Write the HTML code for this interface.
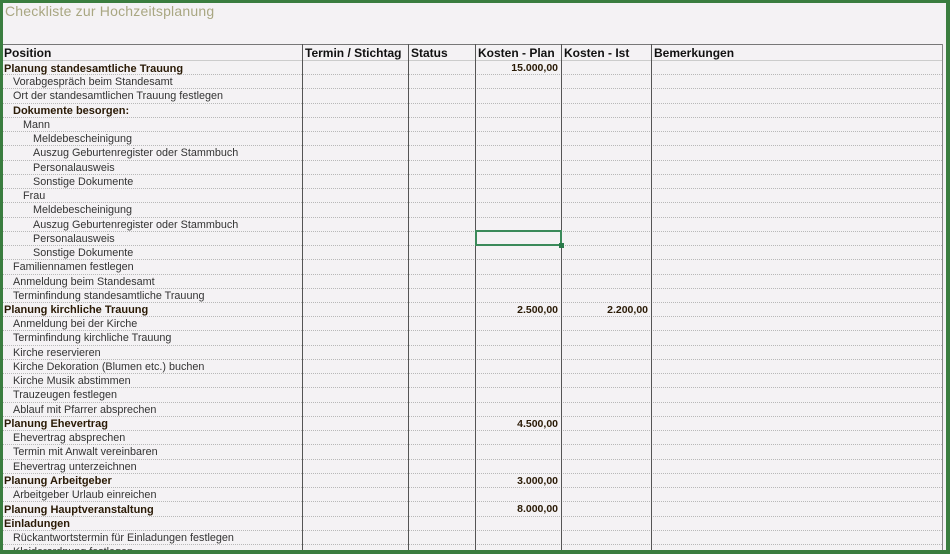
<!DOCTYPE html>
<html><head><meta charset="utf-8"><style>
*{margin:0;padding:0;box-sizing:border-box}
body{width:950px;height:554px;overflow:hidden;background:#3a7d3f;font-family:"Liberation Sans",Arial,sans-serif;position:relative}
#pg{position:absolute;left:3px;top:3px;width:943px;height:547px;background:#f4f2f4;overflow:hidden}
#title{position:absolute;left:2px;top:0px;font-size:14px;color:#a9a782;letter-spacing:0.2px}
.v{position:absolute;top:41px;height:520px;width:1px;background:#555}
#htop{position:absolute;left:0;top:41px;width:940px;height:1px;background:#777}
#hdr{position:absolute;left:0;top:42px;height:16px;width:940px;border-bottom:1px solid #ccc}
#hdr span{position:absolute;top:1px;font-weight:bold;font-size:12px;color:#111}
#rows{position:absolute;left:0;top:58px;width:939px}
.r{position:relative;height:14.24px;border-bottom:1px dotted #b8b8b8;font-size:10.8px;color:#333;white-space:nowrap}
.r span{position:absolute;top:1px}
.b span.t{font-weight:bold;font-size:11px;color:#2a1a05;top:1.5px}
.a{font-weight:bold;font-size:10.5px;color:#2a1a05;text-align:right}
.l0{left:1px}.l1{left:10px}.l2{left:20px}.l3{left:30px}
#sel{position:absolute;left:472px;top:227px;width:87px;height:16px;border:2px solid #3b8a5a;z-index:2}
#sel i{position:absolute;right:-4px;bottom:-4px;width:5px;height:5px;background:#2a7a4a}
</style></head><body>
<div id="pg">
<div id="title">Checkliste zur Hochzeitsplanung</div>
<div id="htop"></div>
<div id="hdr">
<span style="left:1px">Position</span>
<span style="left:302px">Termin / Stichtag</span>
<span style="left:408px">Status</span>
<span style="left:475px">Kosten - Plan</span>
<span style="left:561px">Kosten - Ist</span>
<span style="left:651px">Bemerkungen</span>
</div>
<div id="rows">
<div class="r b"><span class="t l0">Planung standesamtliche Trauung</span><span class="a" style="right:384px">15.000,00</span></div>
<div class="r"><span class="l1">Vorabgespräch beim Standesamt</span></div>
<div class="r"><span class="l1">Ort der standesamtlichen Trauung festlegen</span></div>
<div class="r b"><span class="t l1">Dokumente besorgen:</span></div>
<div class="r"><span class="l2">Mann</span></div>
<div class="r"><span class="l3">Meldebescheinigung</span></div>
<div class="r"><span class="l3">Auszug Geburtenregister oder Stammbuch</span></div>
<div class="r"><span class="l3">Personalausweis</span></div>
<div class="r"><span class="l3">Sonstige Dokumente</span></div>
<div class="r"><span class="l2">Frau</span></div>
<div class="r"><span class="l3">Meldebescheinigung</span></div>
<div class="r"><span class="l3">Auszug Geburtenregister oder Stammbuch</span></div>
<div class="r"><span class="l3">Personalausweis</span></div>
<div class="r"><span class="l3">Sonstige Dokumente</span></div>
<div class="r"><span class="l1">Familiennamen festlegen</span></div>
<div class="r"><span class="l1">Anmeldung beim Standesamt</span></div>
<div class="r"><span class="l1">Terminfindung standesamtliche Trauung</span></div>
<div class="r b"><span class="t l0">Planung kirchliche Trauung</span><span class="a" style="right:384px">2.500,00</span><span class="a" style="right:294px">2.200,00</span></div>
<div class="r"><span class="l1">Anmeldung bei der Kirche</span></div>
<div class="r"><span class="l1">Terminfindung kirchliche Trauung</span></div>
<div class="r"><span class="l1">Kirche reservieren</span></div>
<div class="r"><span class="l1">Kirche Dekoration (Blumen etc.) buchen</span></div>
<div class="r"><span class="l1">Kirche Musik abstimmen</span></div>
<div class="r"><span class="l1">Trauzeugen festlegen</span></div>
<div class="r"><span class="l1">Ablauf mit Pfarrer absprechen</span></div>
<div class="r b"><span class="t l0">Planung Ehevertrag</span><span class="a" style="right:384px">4.500,00</span></div>
<div class="r"><span class="l1">Ehevertrag absprechen</span></div>
<div class="r"><span class="l1">Termin mit Anwalt vereinbaren</span></div>
<div class="r"><span class="l1">Ehevertrag unterzeichnen</span></div>
<div class="r b"><span class="t l0">Planung Arbeitgeber</span><span class="a" style="right:384px">3.000,00</span></div>
<div class="r"><span class="l1">Arbeitgeber Urlaub einreichen</span></div>
<div class="r b"><span class="t l0">Planung Hauptveranstaltung</span><span class="a" style="right:384px">8.000,00</span></div>
<div class="r b"><span class="t l0">Einladungen</span></div>
<div class="r"><span class="l1">Rückantwortstermin für Einladungen festlegen</span></div>
<div class="r"><span class="l1">Kleiderordnung festlegen</span></div>
</div>
<div class="v" style="left:299px"></div>
<div class="v" style="left:405px"></div>
<div class="v" style="left:472px"></div>
<div class="v" style="left:558px"></div>
<div class="v" style="left:648px"></div>
<div class="v" style="left:939px;background:#888"></div>
<div id="sel"><i></i></div>
</div>
</body></html>
